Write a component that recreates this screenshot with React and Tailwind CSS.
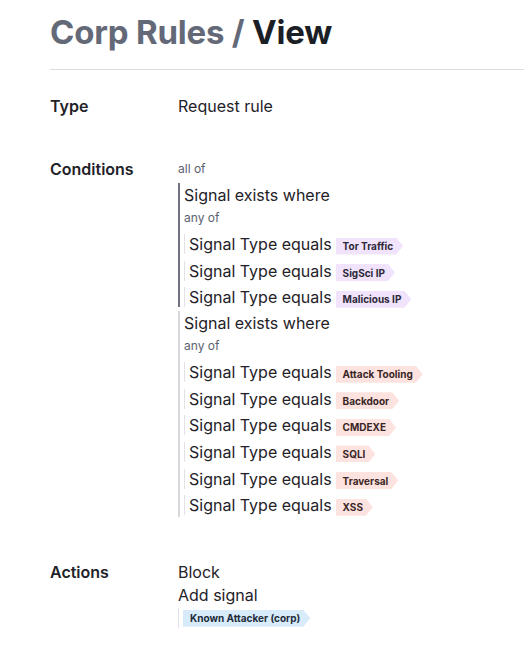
import React from 'react';

const purple = 'bg-[#f0e3fb] text-[#2d2838]';
const red = 'bg-[#fde3df] text-[#3a2626]';
const blue = 'bg-[#d7ebfa] text-[#1e2c3a]';

function Tag({ label, color }) {
  return (
    <span
      className={`inline-flex items-center h-[17px] pl-[7px] pr-[10px] text-[10px] font-bold leading-none [clip-path:polygon(0_0,calc(100%_-_7px)_0,100%_50%,calc(100%_-_7px)_100%,0_100%)] ${color}`}
    >
      {label}
    </span>
  );
}

function Condition({ label, color }) {
  return (
    <div className="flex items-center h-5 border-l border-[#e1e2e6] pl-1">
      <span className="text-base leading-5 text-[#1f2228]">Signal Type equals</span>
      <span className="ml-1">
        <Tag label={label} color={color} />
      </span>
    </div>
  );
}

function Group({ barColor, items, color, className = '' }) {
  return (
    <div className={`border-l-2 pl-1 ${barColor} ${className}`}>
      <div className="text-base leading-6 text-[#1f2228]">Signal exists where</div>
      <div className="text-xs leading-[22px] text-[#5c6170]">any of</div>
      <div className="mt-[5px] flex flex-col gap-[6.6px]">
        {items.map((it) => (
          <Condition key={it} label={it} color={color} />
        ))}
      </div>
    </div>
  );
}

export default function App() {
  return (
    <div className="min-h-screen bg-white font-[Inter,sans-serif] text-[#1f2228]">
      <div className="pl-[50px] pt-[13px]">
        <h1 className="text-[33px] leading-[38px] font-bold tracking-[-0.2px] pb-[18px] border-b border-[#dcdde1]">
          <span className="text-[#646978]">Corp Rules / </span>
          <span className="text-[#1b1e25]">View</span>
        </h1>

        <div className="mt-6 flex">
          <div className="w-[128px] text-base font-semibold leading-6">Type</div>
          <div className="text-base leading-6">Request rule</div>
        </div>

        <div className="mt-[39px] flex">
          <div className="w-[128px] text-base font-semibold leading-6">Conditions</div>
          <div className="flex-1">
            <div className="text-xs leading-6 text-[#5c6170]">all of</div>
            <Group
              className="mt-[2px]"
              barColor="border-[#6e7280]"
              color={purple}
              items={['Tor Traffic', 'SigSci IP', 'Malicious IP']}
            />
            <Group
              className="mt-1 pb-[2px]"
              barColor="border-[#d6d8dd]"
              color={red}
              items={['Attack Tooling', 'Backdoor', 'CMDEXE', 'SQLI', 'Traversal', 'XSS']}
            />
          </div>
        </div>

        <div className="mt-[43px] flex">
          <div className="w-[128px] text-base font-semibold leading-6">Actions</div>
          <div className="flex-1">
            <div className="text-base leading-6">Block</div>
            <div className="text-base leading-[22px]">Add signal</div>
            <div className="mt-[2px] flex items-center h-5 border-l border-[#e1e2e6] pl-1">
              <Tag label="Known Attacker (corp)" color={blue} />
            </div>
          </div>
        </div>
      </div>
    </div>
  );
}
